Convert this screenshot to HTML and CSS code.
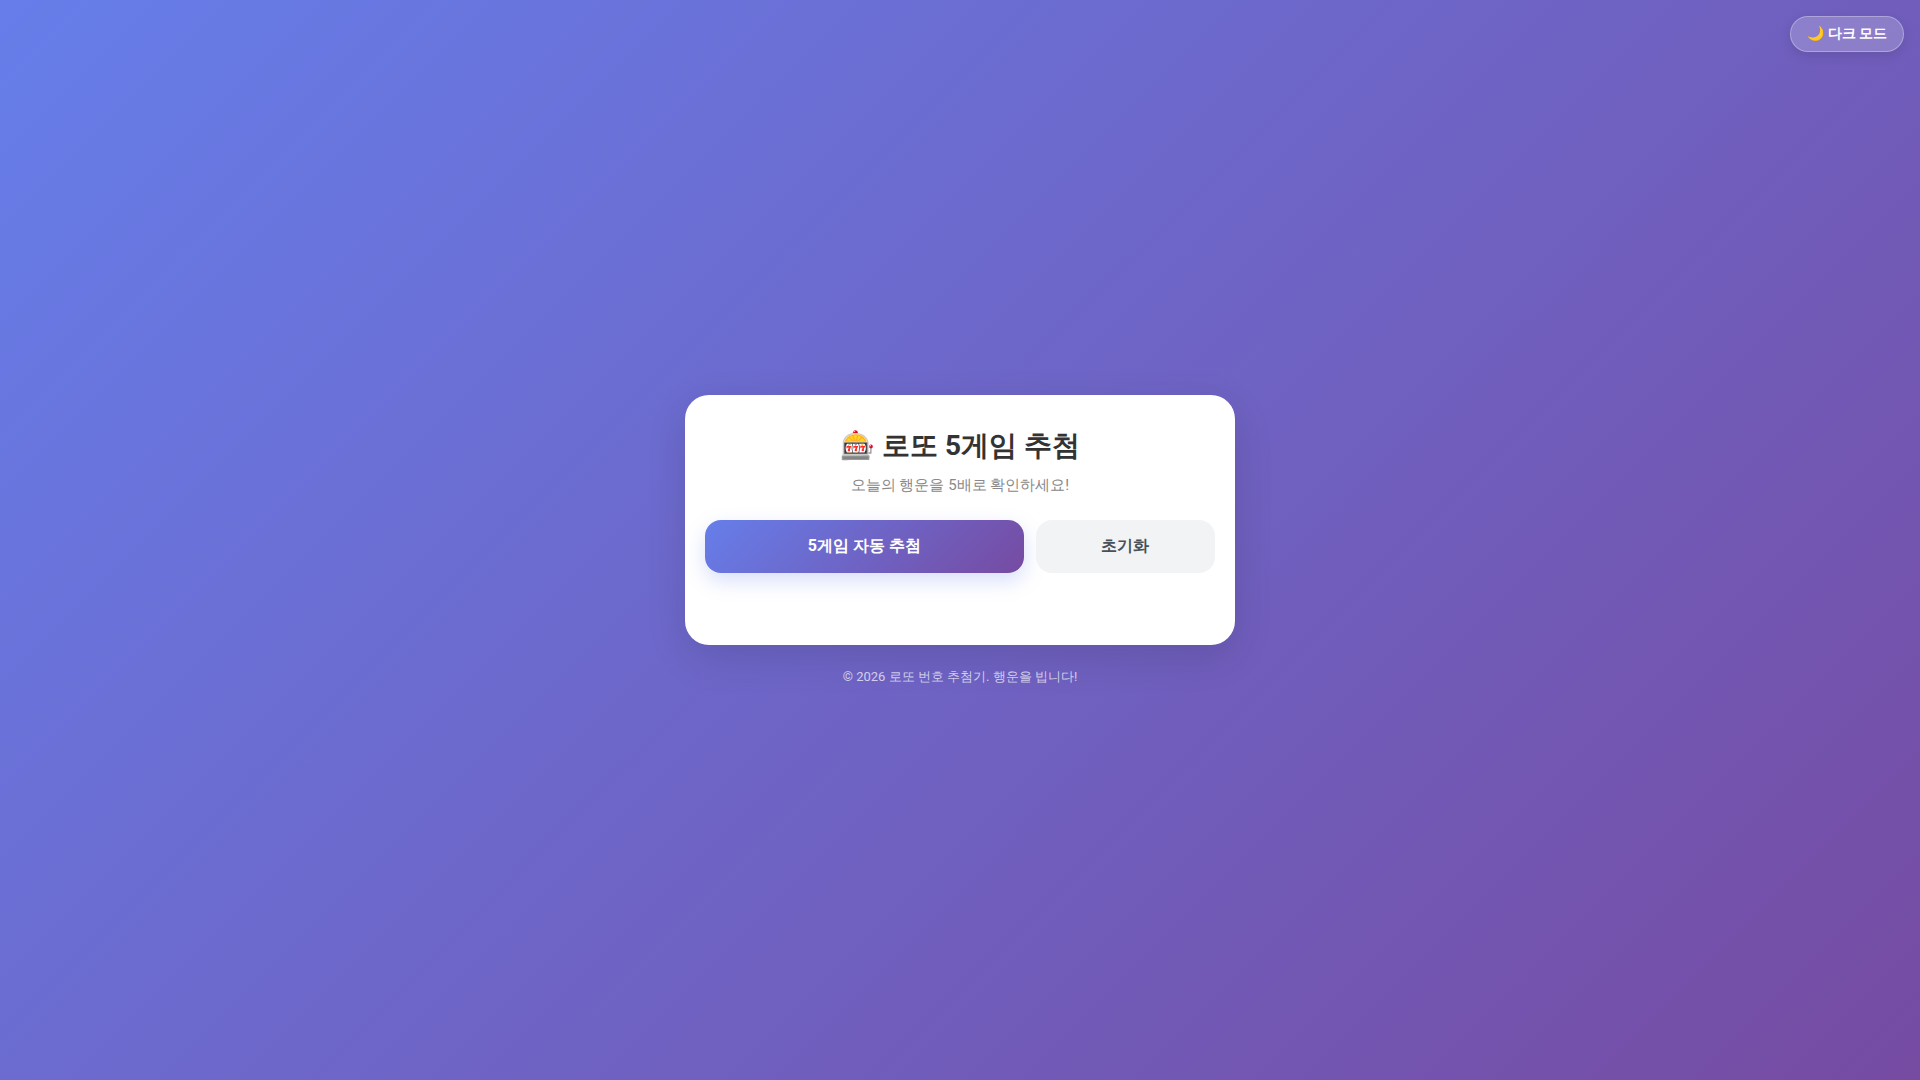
FILE: index.html
```html
<!DOCTYPE html>
<html lang="ko">
<head>
<meta charset="UTF-8">
<meta name="viewport" content="width=device-width, initial-scale=1">
<title>로또 5게임 추첨</title>
<link rel="stylesheet" href="styles.css">
</head>
<body>
<button class="theme-toggle" type="button">🌙 다크 모드</button>
<main class="card">
<h1 class="title">🎰 로또 5게임 추첨</h1>
<p class="subtitle">오늘의 행운을 5배로 확인하세요!</p>
<div class="actions">
<button class="btn btn-primary" type="button">5게임 자동 추첨</button>
<button class="btn btn-reset" type="button">초기화</button>
</div>
</main>
<footer class="footer">© 2026 로또 번호 추첨기. 행운을 빕니다!</footer>
</body>
</html>
```
FILE: styles.css
```css
* {
  box-sizing: border-box;
}

body {
  margin: 0;
  min-height: 100vh;
  padding: 20px;
  display: flex;
  flex-direction: column;
  align-items: center;
  justify-content: center;
  font-family: Roboto, sans-serif;
  background: linear-gradient(135deg, #667eea 0%, #764ba2 100%);
}

button {
  font-family: inherit;
  cursor: pointer;
}

.theme-toggle {
  position: absolute;
  top: 16px;
  right: 16px;
  padding: 8px 16px;
  border: 1px solid rgba(255, 255, 255, 0.3);
  border-radius: 20px;
  background: rgba(255, 255, 255, 0.2);
  color: #fff;
  font-size: 14px;
  font-weight: 600;
  box-shadow: 0 4px 12px rgba(0, 0, 0, 0.1);
}

.card {
  width: 100%;
  max-width: 550px;
  padding: 32px 20px;
  border-radius: 24px;
  background: #fff;
  text-align: center;
  box-shadow: 0 12px 40px rgba(0, 0, 0, 0.12);
}

.title {
  margin: 0 0 10px;
  color: #333;
  font-size: 28px;
  font-weight: 700;
  line-height: 38px;
}

.subtitle {
  margin: 0 0 24px;
  color: #888;
  font-size: 15px;
  line-height: 21px;
}

.actions {
  display: flex;
  gap: 12px;
  margin-bottom: 40px;
}

.btn {
  padding: 16px 20px;
  border: 0;
  border-radius: 16px;
  font-size: 16px;
  font-weight: 700;
}

.btn-primary {
  flex: 2;
  background: linear-gradient(135deg, #667eea 0%, #764ba2 100%);
  color: #fff;
  box-shadow: 0 8px 20px rgba(102, 126, 234, 0.25);
}

.btn-reset {
  flex: 1;
  background: #f1f3f5;
  color: #495057;
}

.footer {
  margin-top: 24px;
  color: rgba(255, 255, 255, 0.7);
  font-size: 13px;
  line-height: 16px;
}
```
